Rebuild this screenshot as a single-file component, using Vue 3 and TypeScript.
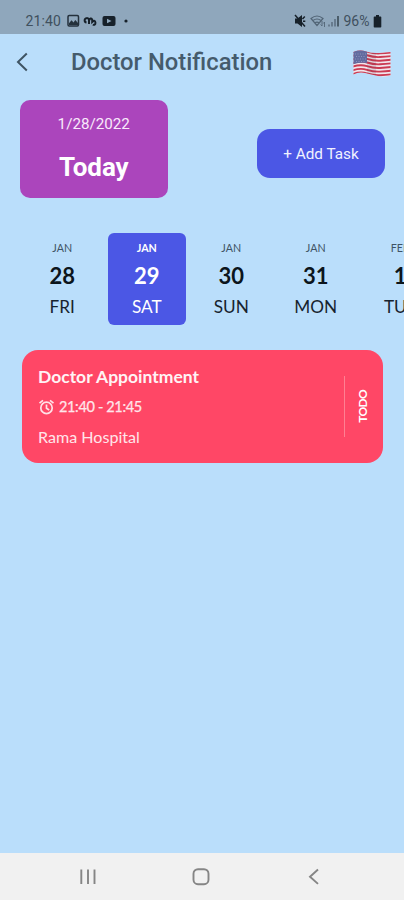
<script setup lang="ts">
interface Day {
  month: string
  date: number
  weekday: string
}

const days: Day[] = [
  { month: 'JAN', date: 28, weekday: 'FRI' },
  { month: 'JAN', date: 29, weekday: 'SAT' },
  { month: 'JAN', date: 30, weekday: 'SUN' },
  { month: 'JAN', date: 31, weekday: 'MON' },
  { month: 'FEB', date: 1, weekday: 'TUE' },
]
const selectedDate = 29

const stripes = [0, 2, 4, 6, 8, 10, 12]
</script>

<template>
  <div class="screen">
    <div class="status">
      <span class="clock">21:40</span>
      <svg class="notif" width="64" height="14" viewBox="0 0 64 14">
        <rect x="1" y="1.500" width="10.500" height="10.500" rx="1.200" fill="none" stroke="#24313c" stroke-width="1.500" />
        <path d="M2 11V9.200l2.500-3 2 2.200L8.300 6l2.700 3v2z" fill="#24313c" />
        <path d="M19.500 8.500a2.200 2.200 0 1 1 2.500-2.600V10M22 6.500q1.500-3.500 3.200-1v2.500q3-2.500 3.200.500t-2.600 2.200" fill="none" stroke="#17212a" stroke-width="2" />
        <rect x="35.500" y="2" width="13" height="10" rx="2" fill="#17212a" />
        <path d="M40 4.800v4.400L44.500 7z" fill="#8fa7bc" />
        <circle cx="59" cy="7" r="1.600" fill="#17212a" />
      </svg>
      <svg class="signal" width="46" height="14" viewBox="0 0 46 14">
        <path d="M1 4.500h2.500L8 1v12L3.500 9.500H1z" fill="#17212a" />
        <path d="M1 1l10 11.500M8.500 5l2.300-2.500M9 7.200h2.300" stroke="#17212a" stroke-width="1.500" fill="none" />
        <g fill="none" stroke="#526576" stroke-width="1.200">
          <path d="M17 4.500q6-5 12 0L23 11.500zM19 6.500q4-3 8 0M21 8.800q2-1.500 4 0" />
          <path d="M28 7v5m-1.500-1.500L28 12M30.500 13V8m-1.200 1.500L30.500 8" stroke-width=".9" />
        </g>
        <path d="M35 12.500v-2M38 12.500V8M41 12.500V5" stroke="#5b6e7f" stroke-width="1.500" />
        <path d="M44 12.500V2" stroke="#34444f" stroke-width="1.500" />
      </svg>
      <span class="percent">96%</span>
      <svg class="battery" width="9" height="13" viewBox="0 0 9 13">
        <path d="M3 0h3v1.500h1.500a.8.8 0 0 1 .8.800V11.700a.8.8 0 0 1-.8.800H1.500a.8.8 0 0 1-.8-.800V2.300a.8.8 0 0 1 .8-.800H3z" fill="#17212a" />
      </svg>
    </div>

    <header class="header">
      <svg class="back" width="14" height="20" viewBox="0 0 14 20">
        <path d="M11.800 1.500L3 10l8.800 8.500" fill="none" stroke="#3f5463" stroke-width="2" />
      </svg>
      <h1>Doctor Notification</h1>
      <svg class="flag" width="40" height="28" viewBox="0 0 40 28">
        <defs>
          <clipPath id="flag-shape">
            <path d="M1.500 2Q8-.5 14 1.500T27 3 38.500 2V25.500Q33 27.500 26 26T13 23 1.500 24.500z" />
          </clipPath>
        </defs>
        <g clip-path="url(#flag-shape)">
          <rect width="40" height="28" fill="#f1e6ec" />
          <g fill="none" stroke="#cb3b52" stroke-width="1.900">
            <path
              v-for="n in stripes"
              :key="n"
              :d="`M0 ${n * 1.82 + 2.4}Q8 ${n * 1.82 - 0.6} 15 ${n * 1.82 + 1.6}T28 ${n * 1.82 + 3.4} 40 ${n * 1.82 + 2.4}`"
            />
          </g>
          <path d="M0 0H15V13Q8 12 0 14.500z" fill="#636b9f" />
          <path d="M3 4h11M4 6.500h10M3 9h11M4 11.500h10" stroke="#9299c0" stroke-width=".9" stroke-dasharray="1 1.500" />
          <path d="M15 0q5 1 9 3v23q-5-2-9-2z" fill="#59304a" opacity=".12" />
        </g>
      </svg>
    </header>

    <section class="summary">
      <div class="today">
        <span class="today-date">1/28/2022</span>
        <strong>Today</strong>
      </div>
      <button class="add" type="button">+ Add Task</button>
    </section>

    <div class="days">
      <div v-for="day in days" :key="day.date" class="day" :class="{ selected: day.date === selectedDate }">
        <span class="month">{{ day.month }}</span>
        <span class="number">{{ day.date }}</span>
        <span class="weekday">{{ day.weekday }}</span>
      </div>
    </div>

    <article class="task">
      <div class="details">
        <h2>Doctor Appointment</h2>
        <div class="time">
          <svg width="17" height="16" viewBox="0 0 17 16" fill="none" stroke="#ffe1e7" stroke-width="1.700">
            <circle cx="8.500" cy="8.900" r="5.700" />
            <path d="M1.500 4.200L5 1.300M12 1.300L15.500 4.200M8.500 5.500v3.800l2.700 1.600" />
          </svg>
          <span>21:40 - 21:45</span>
        </div>
        <p>Rama Hospital</p>
      </div>
      <div class="divider"></div>
      <div class="state"><span>TODO</span></div>
    </article>

    <nav class="nav">
      <svg width="18" height="18" viewBox="0 0 18 18">
        <path d="M2.300 1.500v14.500M9 1.500v14.500M15.500 1.500v14.500" stroke="#858585" stroke-width="1.900" />
      </svg>
      <svg width="18" height="18" viewBox="0 0 18 18">
        <rect x="1.500" y="1.200" width="15" height="15" rx="4.500" fill="none" stroke="#858585" stroke-width="1.900" />
      </svg>
      <svg width="18" height="18" viewBox="0 0 18 18">
        <path d="M13 1.500L5 8.700l8 7.200" fill="none" stroke="#858585" stroke-width="1.900" />
      </svg>
    </nav>
  </div>
</template>

<style>
body {
  margin: 0;
  overflow: hidden;
}
</style>

<style scoped>
.screen {
  box-sizing: border-box;
  display: flex;
  flex-direction: column;
  width: 404px;
  height: 900px;
  overflow: hidden;
  background: #badefb;
  font-family: Lato, sans-serif;
}
svg {
  display: block;
  flex: none;
}
h1,
h2,
p {
  margin: 0;
}
.status {
  flex: none;
  box-sizing: border-box;
  display: flex;
  align-items: center;
  height: 34px;
  padding: 8px 22.500px 0 25.500px;
  background: #8fa7bc;
  color: #40505e;
  font: 14px/18px Roboto, sans-serif;
}
.clock {
  width: 41px;
  letter-spacing: 0.1px;
}
.signal {
  margin-left: auto;
}
.percent {
  margin-left: 4px;
  width: 29px;
}
.header {
  flex: none;
  box-sizing: border-box;
  display: flex;
  align-items: center;
  height: 57px;
  padding: 0 12px 1px 15px;
}
.header h1 {
  flex: 1;
  margin-left: 42px;
  color: #455b6c;
  font: 500 23.800px/30px Roboto, sans-serif;
  white-space: nowrap;
}
.flag {
  margin-top: 3px;
}
.summary {
  flex: none;
  display: flex;
  align-items: center;
  justify-content: space-between;
  margin: 8px 19px 0 20px;
  height: 99px;
  font-family: Roboto, sans-serif;
}
.today {
  box-sizing: border-box;
  display: flex;
  flex-direction: column;
  align-items: center;
  width: 147.500px;
  height: 98px;
  padding-top: 14px;
  border-radius: 10px;
  background: #ab45bc;
  color: #fff;
}
.today-date {
  font-size: 15.200px;
  line-height: 20px;
  color: #f9e9fb;
}
.today strong {
  margin-top: 18px;
  font-size: 26px;
  line-height: 30px;
  letter-spacing: -0.1px;
}
.add {
  width: 128px;
  height: 49px;
  margin-top: 9px;
  padding: 1px 0 0;
  border: 0;
  border-radius: 13px;
  background: #4b57e5;
  color: #f1f2ff;
  font: 15.300px/20px Roboto, sans-serif;
}
.days {
  flex: none;
  display: flex;
  gap: 6px;
  margin: 35px 0 0 23px;
}
.day {
  flex: none;
  box-sizing: border-box;
  display: flex;
  flex-direction: column;
  align-items: center;
  width: 78.500px;
  height: 92px;
  padding-top: 7px;
  border-radius: 6px;
  color: #17232e;
}
.month {
  font-size: 10.700px;
  line-height: 16px;
  color: #3f5365;
}
.number {
  margin-top: 5px;
  font-size: 22px;
  line-height: 30px;
  font-weight: 700;
  color: #0c151c;
}
.weekday {
  margin-top: 4px;
  font-size: 17.200px;
  line-height: 24px;
}
.day.selected {
  background: #4b57e5;
}
.day.selected span {
  color: #fff;
}
.day.selected .month {
  font-weight: 700;
}
.task {
  flex: none;
  box-sizing: border-box;
  display: flex;
  align-items: center;
  width: 361px;
  height: 112.500px;
  margin: 25px 0 0 22px;
  padding-left: 16px;
  border-radius: 16px;
  background: #ff4766;
  color: #ffe5ea;
}
.details {
  flex: 1;
}
.task h2 {
  color: #fff3f5;
  font-size: 17.500px;
  line-height: 24px;
}
.time {
  display: flex;
  align-items: center;
  gap: 4px;
  margin-top: 7px;
  font-size: 14.500px;
  line-height: 22px;
  letter-spacing: -0.350px;
  -webkit-text-stroke: 0.250px currentColor;
}
.task p {
  margin-top: 8px;
  font-size: 16.100px;
  line-height: 22px;
}
.divider {
  width: 1px;
  height: 61px;
  background: #ff8092;
}
.state {
  display: flex;
  justify-content: center;
  width: 36px;
  padding-right: 2px;
  color: #fff;
  font-size: 12px;
  line-height: 16px;
  font-weight: 700;
  letter-spacing: -0.700px;
}
.state span {
  writing-mode: vertical-rl;
  transform: rotate(180deg);
}
.nav {
  display: flex;
  justify-content: space-between;
  align-items: center;
  height: 47px;
  margin-top: auto;
  padding: 0 81px 0 79px;
  background: #f1f1f1;
}
</style>
